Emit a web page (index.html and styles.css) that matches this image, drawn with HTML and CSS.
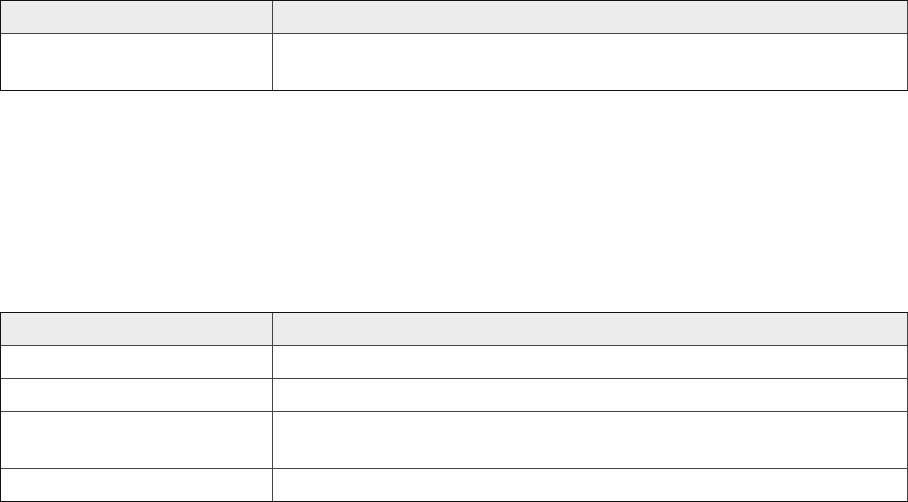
FILE: index.html
```html
<!DOCTYPE html>
<html>
<head>
<meta charset="utf-8">
<link rel="stylesheet" href="styles.css">
</head>
<body>
<div class="page">
  <table class="grid">
    <thead>
      <tr><th class="c1"></th><th class="c2"></th></tr>
    </thead>
    <tbody>
      <tr class="tall"><td></td><td></td></tr>
    </tbody>
  </table>
  <table class="grid">
    <thead>
      <tr><th class="c1"></th><th class="c2"></th></tr>
    </thead>
    <tbody>
      <tr><td></td><td></td></tr>
      <tr><td></td><td></td></tr>
      <tr class="tall"><td></td><td></td></tr>
      <tr><td></td><td></td></tr>
    </tbody>
  </table>
</div>
</body>
</html>
```
FILE: styles.css
```css
html, body {
  margin: 0;
  padding: 0;
  background: #fff;
  font-family: "Liberation Sans", Arial, sans-serif;
}
.page {
  display: flex;
  flex-direction: column;
  gap: 221px;
  width: 908px;
}
.grid {
  width: 908px;
  border-collapse: separate;
  border-spacing: 0;
  border-top: 1px solid #111;
  border-left: 1px solid #111;
  border-bottom: 1px solid #111;
  border-right: 1px solid #444;
  table-layout: fixed;
}
.grid th, .grid td {
  padding: 0;
  border-bottom: 1px solid #444;
  border-right: 1px solid #444;
  height: 33px;
  box-sizing: border-box;
}
.grid th {
  background: #ececec;
}
.grid tr:last-child td { border-bottom: 0; height: 32px; }
.grid th:last-child, .grid td:last-child { border-right: 0; }
.grid .c1 { width: 272px; }
.grid .tall td { height: 57px; }
.grid tr.tall:last-child td { height: 56px; }
```
